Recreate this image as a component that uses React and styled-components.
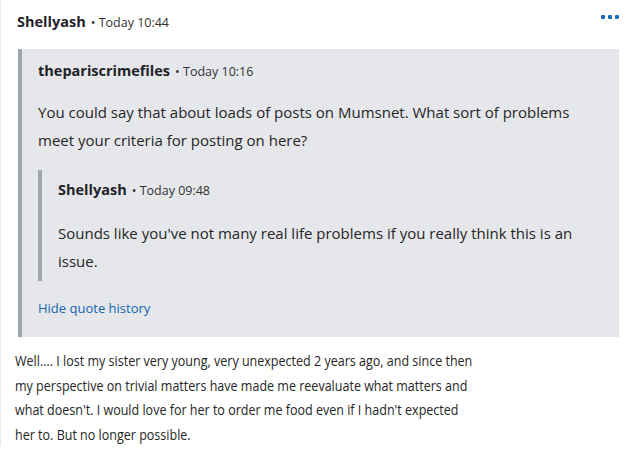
import React from "react";
import styled, { createGlobalStyle } from "styled-components";

const GlobalStyle = createGlobalStyle`
  body {
    margin: 0;
    background: #fff;
    font-family: "Open Sans", "Noto Sans", sans-serif;
    color: #262626;
  }
`;

const Post = styled.div`
  border-left: 1px solid #e8e8e8;
  padding: 12px 12px 0 16px;
  overflow: hidden;
`;

const Header = styled.div`
  display: flex;
  align-items: center;
  justify-content: space-between;
  height: 20px;
`;

const Byline = styled.div`
  display: flex;
  align-items: baseline;
  line-height: 20px;
`;

const Author = styled.span`
  font-weight: 700;
  font-size: 14.5px;
  color: #1f2328;
`;

const Meta = styled.span`
  font-size: 12.5px;
  color: #333;
  margin-left: 5px;
`;

const MoreButton = styled.button`
  border: none;
  background: none;
  padding: 0;
  margin-top: -10px;
  display: flex;
  gap: 3px;
  cursor: pointer;
`;

const Dot = styled.span`
  width: 4px;
  height: 4px;
  border-radius: 1px;
  background: #1a6db5;
`;

const Quote = styled.blockquote`
  margin: ${(p) => (p.$nested ? "16px 0 0" : "17px 0 0 1px")};
  background: ${(p) => (p.$nested ? "transparent" : "#e5e7eb")};
  border-left: 4px solid #a0a4ab;
  padding: ${(p) => (p.$nested ? "10px 16px 6px 16px" : "12px 16px 19px 16px")};
`;

const Text = styled.p`
  margin: ${(p) => p.$top || 0}px 0 0;
  font-size: 15px;
  line-height: 28px;
  color: #262626;
`;

const HideLink = styled.a`
  display: block;
  margin-top: 17px;
  font-size: 13px;
  line-height: 20px;
  color: #1565b0;
  text-decoration: none;
  cursor: pointer;
`;

/* the reply text in the reference is drawn in a narrower face */
const Body = styled.p`
  margin: 11px 0 0 -2px;
  width: 554px;
  font-size: 15px;
  line-height: 24.5px;
  color: #262626;
  transform: scaleX(0.835);
  transform-origin: left top;
`;

const Line = ({ author, time }) => (
  <Byline>
    <Author>{author}</Author>
    <Meta>• {time}</Meta>
  </Byline>
);

export default function App() {
  return (
    <>
      <GlobalStyle />
      <Post>
        <Header>
          <Line author="Shellyash" time="Today 10:44" />
          <MoreButton aria-label="More options">
            <Dot />
            <Dot />
            <Dot />
          </MoreButton>
        </Header>
        <Quote>
          <Header>
            <Line author="thepariscrimefiles" time="Today 10:16" />
          </Header>
          <Text $top={17}>
            You could say that about loads of posts on Mumsnet. What sort of
            problems meet your criteria for posting on here?
          </Text>
          <Quote $nested>
            <Header>
              <Line author="Shellyash" time="Today 09:48" />
            </Header>
            <Text $top={19}>
              Sounds like you've not many real life problems if you really think
              this is an issue.
            </Text>
          </Quote>
          <HideLink>Hide quote history</HideLink>
        </Quote>
        <Body>
          Well.... I lost my sister very young, very unexpected 2 years ago, and
          since then my perspective on trivial matters have made me reevaluate
          what matters and what doesn't. I would love for her to order me food
          even if I hadn't expected her to. But no longer possible.
        </Body>
      </Post>
    </>
  );
}
